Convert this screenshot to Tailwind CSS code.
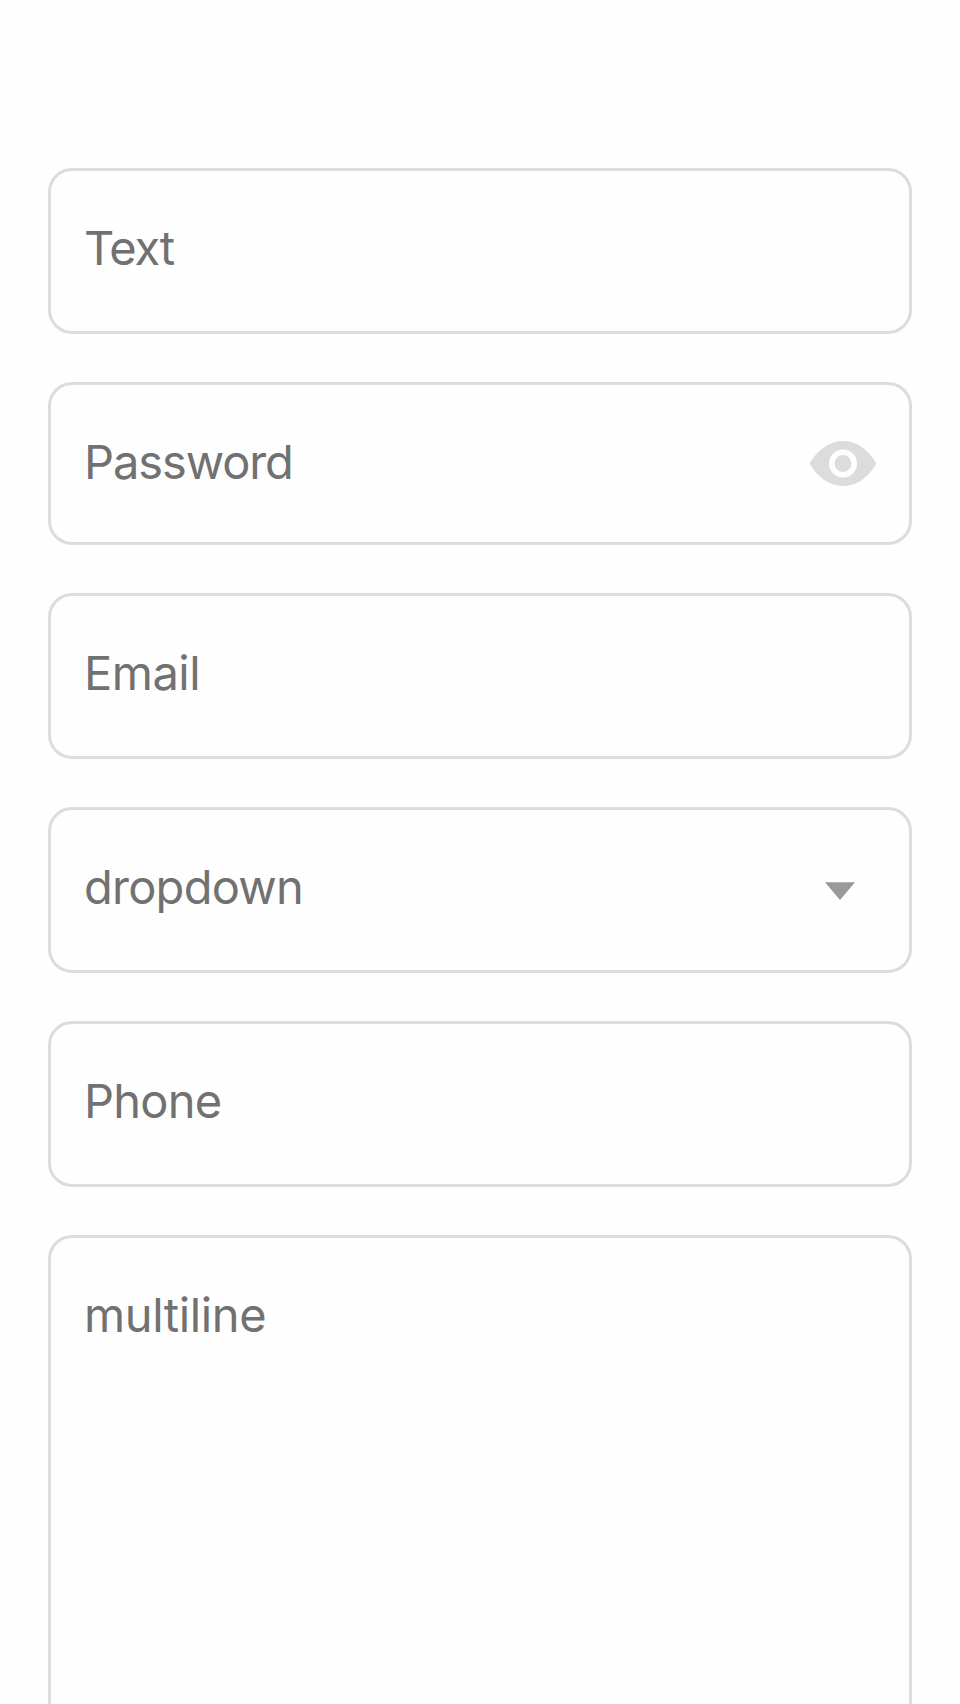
<!DOCTYPE html>
<html lang="en">
<head>
<meta charset="utf-8">
<title>Form</title>
<script src="https://cdn.jsdelivr.net/npm/@tailwindcss/browser@4"></script>
</head>
<body class="bg-[#fefefe]">
<main class="flex h-[1704px] flex-col gap-12 overflow-hidden px-12 pt-[168px] font-['Inter',sans-serif] text-[47px] leading-[57px] text-[#717171]">
  <div class="flex h-[166px] shrink-0 items-start rounded-3xl border-3 border-[#dcdcdc] px-[33px] pt-12">
    <span class="tracking-[-1.3px]">Text</span>
  </div>
  <div class="flex h-[163px] shrink-0 items-start justify-between rounded-3xl border-3 border-[#dcdcdc] px-[33px] pt-12">
    <span class="tracking-[-1.1px]">Password</span>
    <svg class="mt-2 h-[45px] w-[66px]" viewBox="0 0 66 45" fill="none">
      <path d="M.3 23.7Q-.3 22.5 .3 21.3C8.500 8 20 0 33 0S57.500 8 65.700 21.300Q66.300 22.500 65.700 23.700C57.500 37 46 45 33 45S8.500 37 .3 23.700Z" fill="#dcdcdc"/>
      <circle cx="33" cy="22.500" r="11.200" stroke="#fefefe" stroke-width="5.600"/>
    </svg>
  </div>
  <div class="flex h-[166px] shrink-0 items-start rounded-3xl border-3 border-[#dcdcdc] px-[33px] pt-12">
    <span class="tracking-[-0.5px]">Email</span>
  </div>
  <div class="flex h-[166px] shrink-0 items-start justify-between rounded-3xl border-3 border-[#dcdcdc] px-[33px] pt-12">
    <span class="tracking-[-0.75px]">dropdown</span>
    <svg class="mt-6 mr-[21px] h-[18px] w-[30px]" viewBox="0 0 30 18"><path d="M0 .3H30L15 18Z" fill="#999"/></svg>
  </div>
  <div class="flex h-[166px] shrink-0 items-start rounded-3xl border-3 border-[#dcdcdc] px-[33px] pt-12">
    <span class="tracking-[-0.75px]">Phone</span>
  </div>
  <div class="h-[490px] shrink-0 rounded-3xl border-3 border-[#dcdcdc] px-[33px] pt-12">
    <span class="block tracking-[-0.4px]">multiline</span>
  </div>
</main>
</body>
</html>
